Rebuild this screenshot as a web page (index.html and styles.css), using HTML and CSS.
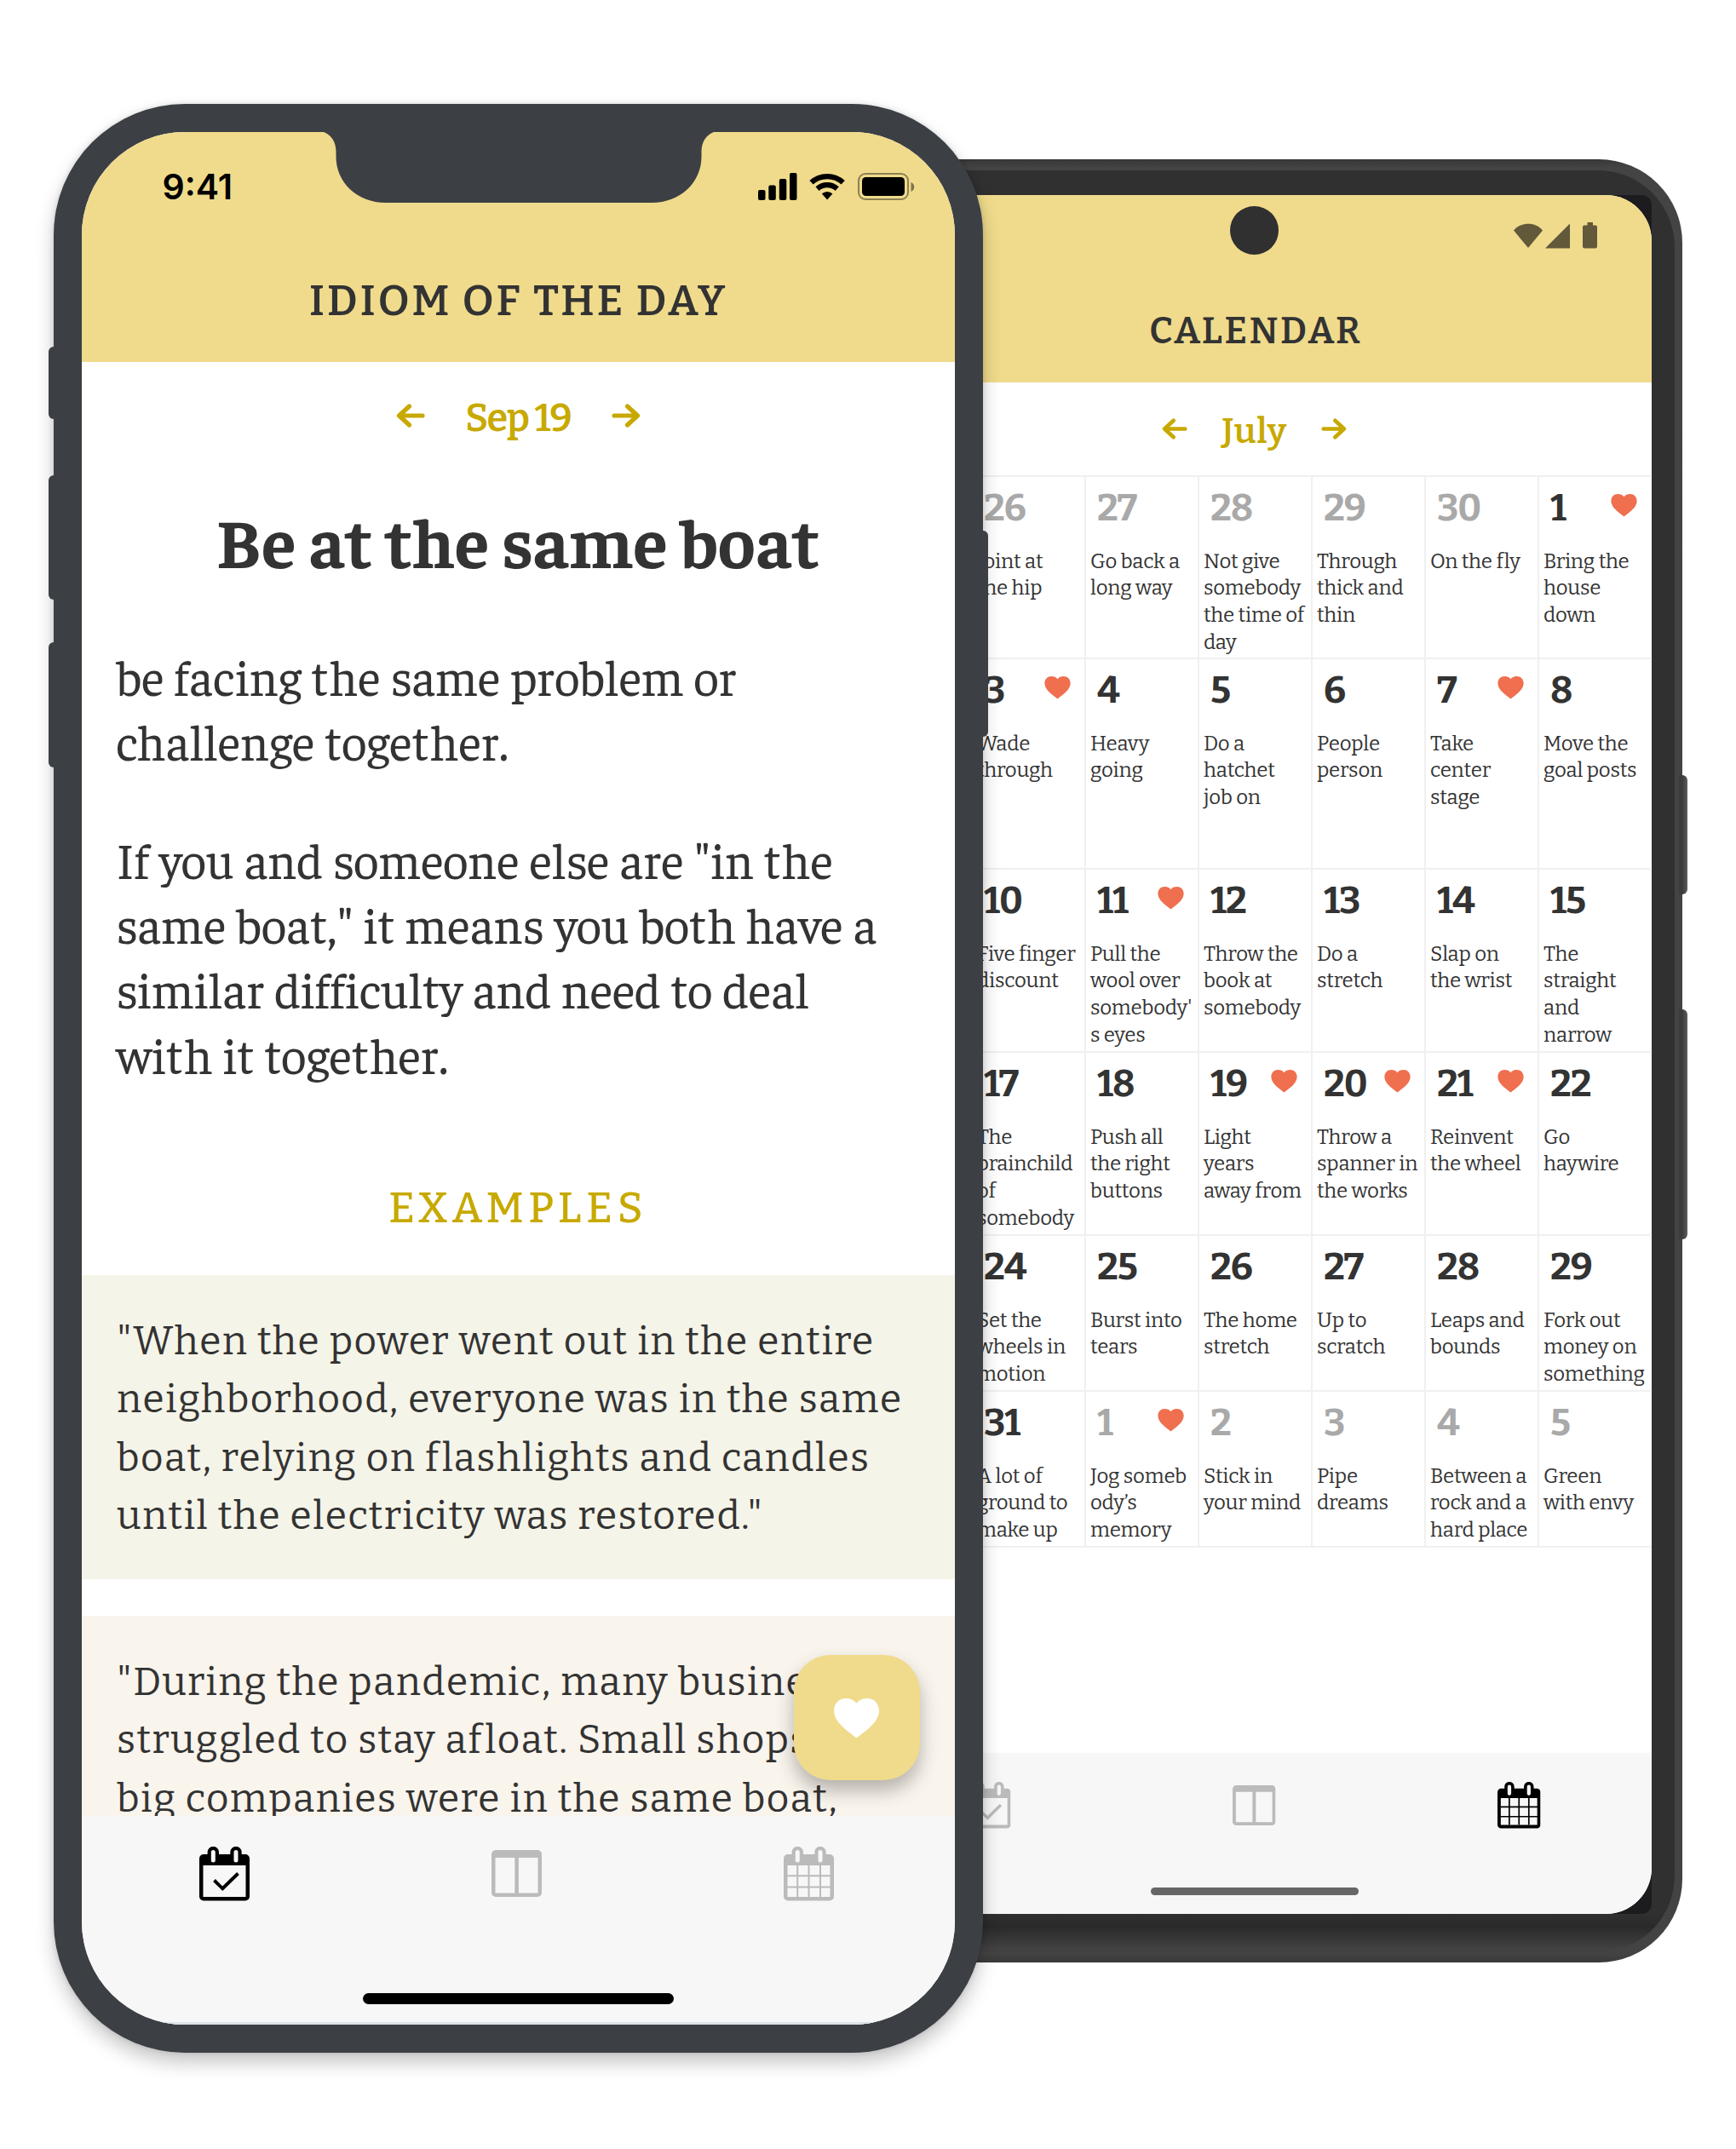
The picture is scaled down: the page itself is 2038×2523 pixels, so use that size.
FILE: index.html
```html
<!DOCTYPE html>
<html lang="en">
<head>
<meta charset="utf-8">
<title>Idiom of the Day</title>
<link rel="stylesheet" href="styles.css">
</head>
<body>
<svg class="defs" width="0" height="0">
  <symbol id="heart" viewBox="0 0 53 49"><path d="M26.500 46.500C19 40 0 29 0 14.500C0 6 6 0 14 0C19.500 0 23.500 2 26.500 5.500C29.500 2 33.500 0 39 0C47 0 53 6 53 14.500C53 29 34 40 26.500 46.500Z" fill="currentColor"/></symbol>
  <symbol id="arrow" viewBox="0 0 34 28"><path d="M3 14H29M18.500 3L30.500 14L18.500 25" fill="none" stroke="currentColor" stroke-width="5.200" stroke-linecap="round" stroke-linejoin="round"/></symbol>
  <symbol id="frame" viewBox="0 0 59 64"><path fill-rule="evenodd" fill="currentColor" d="M5 9H9.600V6.500A6.500 6.500 0 0 1 23 6.500V9H36.300V6.500A6.500 6.500 0 0 1 49.700 6.500V9H54A5 5 0 0 1 59 14V58.500A5 5 0 0 1 54 63.500H5A5 5 0 0 1 0 58.500V14A5 5 0 0 1 5 9ZM4.500 22V59H54.500V22ZM13.800 6.500V16A2.500 2.500 0 0 0 18.800 16V6.500A2.500 2.500 0 0 0 13.800 6.500ZM40.500 6.500V16A2.500 2.500 0 0 0 45.500 16V6.500A2.500 2.500 0 0 0 40.500 6.500Z"/></symbol>
  <symbol id="today" viewBox="0 0 59 64"><use href="#frame"/><path d="M17.500 39.500L27.300 49.300L45.500 31.500" fill="none" stroke="currentColor" stroke-width="4"/></symbol>
  <symbol id="month" viewBox="0 0 59 64"><use href="#frame"/><path d="M16.200 22V59M29.500 22V59M43 22V59M4 34.200H55M4 47.500H55" fill="none" stroke="currentColor" stroke-width="2"/></symbol>
  <symbol id="cards" viewBox="0 0 59 55"><path fill-rule="evenodd" fill="currentColor" d="M5 0H54A5 5 0 0 1 59 5V50A5 5 0 0 1 54 55H5A5 5 0 0 1 0 50V5A5 5 0 0 1 5 0ZM4.500 9V50.500H27.300V9ZM31.900 9V50.500H54.500V9Z"/></symbol>
</svg>

<main class="stage">
  <section class="android">
    <i class="key power"></i><i class="key volume"></i>
    <div class="ring">
      <div class="glass">
      <div class="a-screen">
        <header class="a-head">
          <div class="a-status">
            <svg width="100" height="31" viewBox="0 0 100 31"><g fill="#62583a"><path d="M0 9.500C8 -1 26 -1 34 9.500L17 30Z"/><path d="M37 30.500L66 1.500V30.500Z"/><path d="M82 3.500H86.500V0H93V3.500H96A2 2 0 0 1 98 5.500V28.500A2 2 0 0 1 96 30.500H83A2 2 0 0 1 81 28.500V5.500A2 2 0 0 1 83 3.500Z"/></g></svg>
          </div>
          <h1 class="a-title">CALENDAR</h1>
        </header>
        <div class="pager small"><svg class="back"><use href="#arrow"/></svg><span class="when">July</span><svg><use href="#arrow"/></svg></div>
        <div class="grid">
          <div class="cell"></div>
          <div class="cell out"><b>26</b><p>Joint at<br>the hip</p></div>
          <div class="cell out"><b>27</b><p>Go back a<br>long way</p></div>
          <div class="cell out"><b>28</b><p>Not give<br>somebody<br>the time of<br>day</p></div>
          <div class="cell out"><b>29</b><p>Through<br>thick and<br>thin</p></div>
          <div class="cell out"><b>30</b><p>On the fly</p></div>
          <div class="cell"><b>1</b><svg><use href="#heart"/></svg><p>Bring the<br>house<br>down</p></div>

          <div class="cell"></div>
          <div class="cell"><b>3</b><svg><use href="#heart"/></svg><p>Wade<br>through</p></div>
          <div class="cell"><b>4</b><p>Heavy<br>going</p></div>
          <div class="cell"><b>5</b><p>Do a<br>hatchet<br>job on</p></div>
          <div class="cell"><b>6</b><p>People<br>person</p></div>
          <div class="cell"><b>7</b><svg><use href="#heart"/></svg><p>Take<br>center<br>stage</p></div>
          <div class="cell"><b>8</b><p>Move the<br>goal posts</p></div>

          <div class="cell"></div>
          <div class="cell"><b>10</b><p>Five finger<br>discount</p></div>
          <div class="cell"><b>11</b><svg><use href="#heart"/></svg><p>Pull the<br>wool over<br>somebody'<br>s eyes</p></div>
          <div class="cell"><b>12</b><p>Throw the<br>book at<br>somebody</p></div>
          <div class="cell"><b>13</b><p>Do a<br>stretch</p></div>
          <div class="cell"><b>14</b><p>Slap on<br>the wrist</p></div>
          <div class="cell"><b>15</b><p>The<br>straight<br>and<br>narrow</p></div>

          <div class="cell"></div>
          <div class="cell"><b>17</b><p>The<br>brainchild<br>of<br>somebody</p></div>
          <div class="cell"><b>18</b><p>Push all<br>the right<br>buttons</p></div>
          <div class="cell"><b>19</b><svg><use href="#heart"/></svg><p>Light<br>years<br>away from</p></div>
          <div class="cell"><b>20</b><svg><use href="#heart"/></svg><p>Throw a<br>spanner in<br>the works</p></div>
          <div class="cell"><b>21</b><svg><use href="#heart"/></svg><p>Reinvent<br>the wheel</p></div>
          <div class="cell"><b>22</b><p>Go<br>haywire</p></div>

          <div class="cell"></div>
          <div class="cell"><b>24</b><p>Set the<br>wheels in<br>motion</p></div>
          <div class="cell"><b>25</b><p>Burst into<br>tears</p></div>
          <div class="cell"><b>26</b><p>The home<br>stretch</p></div>
          <div class="cell"><b>27</b><p>Up to<br>scratch</p></div>
          <div class="cell"><b>28</b><p>Leaps and<br>bounds</p></div>
          <div class="cell"><b>29</b><p>Fork out<br>money on<br>something</p></div>

          <div class="cell"></div>
          <div class="cell"><b>31</b><p>A lot of<br>ground to<br>make up</p></div>
          <div class="cell out"><b>1</b><svg><use href="#heart"/></svg><p>Jog someb<br>ody’s<br>memory</p></div>
          <div class="cell out"><b>2</b><p>Stick in<br>your mind</p></div>
          <div class="cell out"><b>3</b><p>Pipe<br>dreams</p></div>
          <div class="cell out"><b>4</b><p>Between a<br>rock and a<br>hard place</p></div>
          <div class="cell out"><b>5</b><p>Green<br>with envy</p></div>
        </div>
        <nav class="a-nav">
          <div class="tabs"><svg class="cal"><use href="#today"/></svg><svg class="col"><use href="#cards"/></svg><svg class="cal on"><use href="#month"/></svg></div>
          <i class="home"></i>
        </nav>
        <i class="camera"></i>
      </div>
      </div>
    </div>
  </section>

  <section class="iphone">
    <i class="btn mute"></i><i class="btn up"></i><i class="btn down"></i><i class="btn side"></i>
    <div class="screen">
      <header class="head">
        <div class="status">
          <span class="time">9:41</span>
          <svg width="184" height="34" viewBox="0 0 184 34"><rect x="0" y="21" width="8.500" height="12" rx="2"/><rect x="12.300" y="15.500" width="8.500" height="17.500" rx="2"/><rect x="24.800" y="8" width="8.500" height="25" rx="2"/><rect x="37" y="1" width="8.500" height="32" rx="2"/><g fill="none" stroke="#000"><path d="M62.500 12.300A27.500 27.500 0 0 1 99.700 12.300" stroke-width="6.200"/><path d="M69.500 19.600A17.500 17.500 0 0 1 92.700 19.600" stroke-width="6.200"/></g><path d="M74.800 25.500A9 9 0 0 1 87.400 25.500L81.100 32.500Z"/><rect x="118" y="2" width="58" height="30" rx="8" fill="none" stroke="#8c8054" stroke-width="2"/><rect x="122" y="6" width="50" height="22" rx="4.500"/><path d="M179.500 12C184.500 14 184.500 21 179.500 23Z" fill="#7f744c"/></svg>
        </div>
        <h1 class="title">IDIOM OF THE DAY</h1>
      </header>
      <div class="pager"><svg class="back"><use href="#arrow"/></svg><span class="when">Sep 19</span><svg><use href="#arrow"/></svg></div>
      <h2 class="idiom">Be at the same boat</h2>
      <div class="meaning">
        <p>be facing the same problem or<br>challenge together.</p>
        <p>If you and someone else are "in the<br>same boat," it means you both have a<br>similar difficulty and need to deal<br>with it together.</p>
      </div>
      <h3 class="sub">EXAMPLES</h3>
      <div class="example green">"When the power went out in the entire<br>neighborhood, everyone was in the same<br>boat, relying on flashlights and candles<br>until the electricity was restored."</div>
      <div class="example beige">"During the pandemic, many businesses<br>struggled to stay afloat. Small shops<br>big companies were in the same boat,</div>
      <nav class="nav">
        <div class="tabs"><svg class="cal on"><use href="#today"/></svg><svg class="col"><use href="#cards"/></svg><svg class="cal"><use href="#month"/></svg></div>
        <i class="home"></i>
      </nav>
      <button class="fab"><svg><use href="#heart"/></svg></button>
    </div>
    <svg class="notch" width="464" height="84" viewBox="0 0 464 84"><path d="M0 0C12 3 17.500 13 17.500 24V30C17.500 60 42 84 76 84H388C422 84 446.500 60 446.500 30V24C446.500 13 452 3 464 0Z" fill="#3c3f44"/></svg>
  </section>
</main>
</body>
</html>
```
FILE: styles.css
```css
* { box-sizing: border-box; margin: 0; padding: 0; }
body { background: #fff; color: #333; font-family: "Roboto Slab", Bitter, "DejaVu Serif Condensed", serif; }
svg { display: block; flex: none; }
i { display: block; }
.defs { position: absolute; }
.stage { position: relative; width: 2038px; height: 2523px; overflow: hidden; }

/* Android device */
.android { position: absolute; left: 971px; top: 187px; width: 1003.500px; height: 2117px; padding: 13px 9px 12px; border-radius: 98px; background: linear-gradient(#373737, #444 10px, #434343 99.500%, #3a3a3a); }
.key { position: absolute; right: -6.500px; width: 10px; border-radius: 0 6px 6px 0; background: linear-gradient(90deg, #3c3c3c 40%, #5e5e5e); }
.power { top: 723px; height: 140px; }
.volume { top: 998px; height: 270px; }
.ring { position: relative; height: 2092px; padding: 29px 27px; border-radius: 90px; background: linear-gradient(#303030 2047px, #2a2a2a 2062px, #424242 2088px); }
.glass { height: 2018px; border-radius: 12px; background: #1c1c1e; }
.a-screen { position: relative; display: flex; flex-direction: column; height: 2018px; border-radius: 54px; overflow: hidden; background: #fff; }
.a-head { height: 220px; background: #f0db8c; }
.a-status { display: flex; justify-content: flex-end; height: 94px; padding: 32px 62px 0 0; }
.a-title { height: 132px; padding-left: 3px; line-height: 132px; text-align: center; font-size: 43.500px; font-weight: 600; letter-spacing: 2.500px; }
.camera { position: absolute; left: 437px; top: 13px; width: 57px; height: 57px; border-radius: 50%; background: #303030; }
.pager { display: flex; flex: none; justify-content: center; align-items: center; gap: 48px; height: 130px; color: #c7a900; font-size: 45px; font-weight: 600; }
.when { width: 123px; padding-top: 2px; display: flex; justify-content: center; letter-spacing: -1.400px; }
.pager svg { width: 34px; height: 28px; margin-top: -4px; }
.pager .back { transform: scaleX(-1); }
.pager.small { gap: 40px; height: 109px; font-size: 41px; }
.small .when { width: 77px; padding-top: 5px; letter-spacing: .8px; }
.pager.small svg { width: 30px; height: 25px; margin-top: 0; }
.grid { display: grid; flex: none; grid-template-columns: repeat(7, 133px); grid-template-rows: 214px 247px 215px 215px 183px 183px; border-bottom: 2px solid #f0f0f0; }
.cell { display: grid; grid-template-columns: 1fr auto; align-content: start; border-top: 2px solid #f0f0f0; border-left: 2px solid #f0f0f0; white-space: nowrap; }
.cell b { padding: 8.500px 0 0 13px; line-height: 56px; font-size: 44px; font-weight: 700; letter-spacing: -1px; }
.out b { color: #a9a9a9; }
.cell svg { width: 31px; height: 28px; margin: 20px 16px 0 0; color: #ef6f4f; }
.cell p { grid-column: 1 / -1; padding: 19px 0 0 5px; font-size: 24px; line-height: 31.700px; letter-spacing: -.2px; }
.a-nav { height: 189px; margin-top: auto; padding-top: 34px; background: #f7f7f7; }
.tabs { display: flex; justify-content: center; align-items: center; gap: 284px; padding-right: 2.600px; color: #bbb; }
.tabs .on { color: #000; }
.cal { width: 59px; height: 64px; }
.col { width: 59px; height: 55px; }
.a-nav .tabs { gap: 260.500px; padding-right: 1px; }
.a-nav .cal { width: 50.500px; height: 55px; }
.a-nav .col { width: 50.500px; height: 47px; }
.home { width: 365px; height: 13px; margin: 108px auto 0; border-radius: 7px; background: #000; }
.a-nav .home { width: 244px; height: 9px; margin-top: 68.500px; border-radius: 5px; background: #666; }

/* iPhone device */
.iphone { position: absolute; left: 62.500px; top: 122px; width: 1091.500px; height: 2288px; padding: 33px; border-radius: 154px; background: #3c3f44; box-shadow: 0 12px 22px rgba(0, 0, 0, .22), 0 0 6px rgba(0, 0, 0, .12); }
.btn { position: absolute; left: -5.500px; width: 10px; border-radius: 6px 0 0 6px; background: #3c3f44; }
.mute { top: 285px; height: 85px; }
.up { top: 436px; height: 146px; }
.down { top: 632px; height: 147px; }
.side { left: auto; right: -6px; top: 501px; height: 242px; border-radius: 0 6px 6px 0; }
.screen { position: relative; display: flex; flex-direction: column; height: 2222px; border-radius: 121px; overflow: hidden; background: #fff; white-space: nowrap; }
.notch { position: absolute; left: 314px; top: 32px; }
.head { flex: none; height: 270px; background: #f0db8c; }
.status { display: flex; justify-content: space-between; align-items: center; height: 128px; padding: 0 47px 0 95px; }
.time { font: 600 41px Inter, sans-serif; color: #000; }
.title { height: 142px; padding-left: 1px; line-height: 141px; text-align: center; font-size: 50px; font-weight: 600; letter-spacing: 3px; }
.idiom { flex: none; height: 170px; text-align: center; font: 700 83px/155px Faustina, "Liberation Serif", serif; }
.meaning { flex: none; height: 612px; padding: 29.800px 41px 0; font: 58.650px/76.300px Faustina, "Liberation Serif", serif; font-variant-ligatures: none; }
.meaning p + p { margin-top: 62.500px; }
.sub { flex: none; height: 159.500px; line-height: 163px; text-align: center; color: #c7a900; font-size: 50px; font-weight: 550; letter-spacing: 5.600px; }
.example { flex: none; height: 357.500px; padding: 44px 41.500px 0; font-size: 46px; line-height: 68.600px; letter-spacing: 1.400px; }
.green { background: #f5f4e8; }
.beige { margin-top: 42.500px; background: #f9f4ec; }
.nav { position: absolute; left: 0; right: 0; bottom: 0; height: 245px; padding-top: 35.500px; background: #f7f7f7; border-bottom: 3px solid #dde2e6; }
.fab { position: absolute; left: 836.500px; top: 1788px; display: grid; place-items: center; width: 147.500px; height: 147px; border: 0; border-radius: 43px; background: #f0db8c; color: #fff; box-shadow: 0 12px 22px rgba(0, 0, 0, .28); }
.fab svg { width: 53px; height: 49px; margin-top: 3px; }
```
